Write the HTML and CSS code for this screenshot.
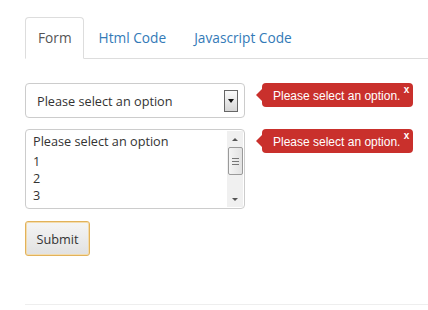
FILE: index.html
```html
<!DOCTYPE html>
<html lang="en">
<head>
<meta charset="UTF-8">
<title>Select validation</title>
<link rel="stylesheet" href="styles.css">
</head>
<body>
<div class="page">
<ul class="tabs">
<li class="tab active"><a>Form</a></li>
<li class="tab"><a>Html Code</a></li>
<li class="tab"><a>Javascript Code</a></li>
</ul>

<form class="demo-form">
<div class="field-row">
<div class="select-box">
<span class="select-text">Please select an option</span>
<span class="drop-btn"><span class="tri-down"></span></span>
</div>
<div class="error-tip">
<span class="tip-text">Please select an option.</span>
<span class="tip-close">x</span>
</div>
</div>

<div class="field-row">
<div class="list-box">
<ul class="list-options">
<li class="placeholder">Please select an option</li>
<li>1</li>
<li>2</li>
<li>3</li>
</ul>
<div class="scroll-bar">
<span class="scroll-arrow"><span class="tri-up small"></span></span>
<span class="scroll-thumb"><i></i><i></i><i></i></span>
<span class="scroll-track"></span>
<span class="scroll-arrow"><span class="tri-down small"></span></span>
</div>
</div>
<div class="error-tip">
<span class="tip-text">Please select an option.</span>
<span class="tip-close">x</span>
</div>
</div>

<button type="button" class="submit-btn">Submit</button>
</form>

<div class="footer-line"></div>
</div>
</body>
</html>
```

FILE: styles.css
```css
body {
margin: 0;
font-family: 'Open Sans', 'Noto Sans', sans-serif;
font-size: 13px;
color: #333;
background: #fff;
}
.page {
padding: 17px 0 0 25px;
}
.tabs {
list-style: none;
margin: 0;
padding: 0;
display: flex;
border-bottom: 1px solid #ddd;
}
.tab {
margin-right: 2px;
margin-bottom: -1px;
}
.tab a {
display: block;
padding: 10px 12px;
line-height: 20px;
font-size: 13.7px;
color: #337ab7;
border: 1px solid transparent;
border-radius: 4px 4px 0 0;
}
.tab.active a {
color: #555;
background: #fff;
padding: 10px 11px 10px 12px;
border-color: #ddd #ddd transparent;
}
.demo-form {
padding-top: 24px;
}
.field-row {
display: flex;
align-items: flex-start;
margin-bottom: 11px;
}
.select-box {
box-sizing: border-box;
width: 220px;
height: 35px;
border: 1px solid #ccc;
border-radius: 4px;
display: flex;
align-items: center;
justify-content: space-between;
padding: 0 6px 0 11px;
}
.select-text {
font-size: 12.7px;
color: #333;
}
.drop-btn {
box-sizing: border-box;
width: 14px;
height: 22px;
border: 1px solid #666;
background: linear-gradient(#fafafa, #d6d6d6);
display: flex;
align-items: center;
justify-content: center;
}
.tri-down {
width: 0;
height: 0;
border-left: 3.5px solid transparent;
border-right: 3.5px solid transparent;
border-top: 4px solid #111;
}
.tri-up {
width: 0;
height: 0;
border-left: 3.5px solid transparent;
border-right: 3.5px solid transparent;
border-bottom: 4px solid #111;
}
.tri-down.small, .tri-up.small {
border-left-width: 3px;
border-right-width: 3px;
border-top-color: #555;
border-bottom-color: #555;
}
.tri-down.small {
border-top-width: 3px;
}
.tri-up.small {
border-bottom-width: 3px;
}
.error-tip {
position: relative;
margin-left: 17px;
height: 24px;
background: #c9302c;
border-radius: 4px;
color: #fff;
font-family: 'Liberation Sans', Arial, sans-serif;
font-size: 12px;
display: flex;
align-items: center;
padding: 0 13px 0 11px;
}
.error-tip:before {
content: "";
position: absolute;
left: -6px;
top: 6px;
border-top: 6px solid transparent;
border-bottom: 6px solid transparent;
border-right: 6px solid #c9302c;
}
.tip-text {
margin-top: 1px;
}
.tip-close {
position: absolute;
right: 4px;
top: 2px;
font-size: 10px;
font-weight: bold;
line-height: 10px;
}
.list-box {
box-sizing: border-box;
width: 220px;
height: 80px;
border: 1px solid #ccc;
border-radius: 4px;
display: flex;
overflow: hidden;
}
.list-options {
list-style: none;
margin: 0;
padding: 3px 0 0 7px;
flex: 1;
}
.list-options li {
line-height: 17px;
font-size: 12.7px;
}
.list-options .placeholder {
padding-bottom: 3px;
}
.scroll-bar {
width: 16px;
margin: 1px 1px 1px 0;
background: #f0f0f0;
display: flex;
flex-direction: column;
align-items: center;
}
.scroll-arrow {
height: 16px;
display: flex;
align-items: center;
justify-content: center;
}
.scroll-thumb {
box-sizing: border-box;
width: 15px;
height: 28px;
border: 1px solid #9a9a9a;
border-radius: 2px;
background: linear-gradient(to right, #f4f4f4, #e2e2e2);
display: flex;
flex-direction: column;
align-items: center;
justify-content: center;
gap: 2px;
}
.scroll-thumb i {
display: block;
width: 7px;
height: 1px;
background: #777;
}
.scroll-track {
flex: 1;
}
.submit-btn {
box-sizing: border-box;
width: 65px;
height: 35px;
margin-top: 1px;
border: 1px solid #e2b25a;
box-shadow: inset 0 0 0 1px #f3dcae;
border-radius: 3px;
background: linear-gradient(#f5f5f5, #e1e1e1);
font-family: 'Open Sans', 'Noto Sans', sans-serif;
font-size: 12.7px;
color: #333;
padding: 0;
}
.footer-line {
margin-top: 48px;
border-top: 1px solid #eee;
}
```
